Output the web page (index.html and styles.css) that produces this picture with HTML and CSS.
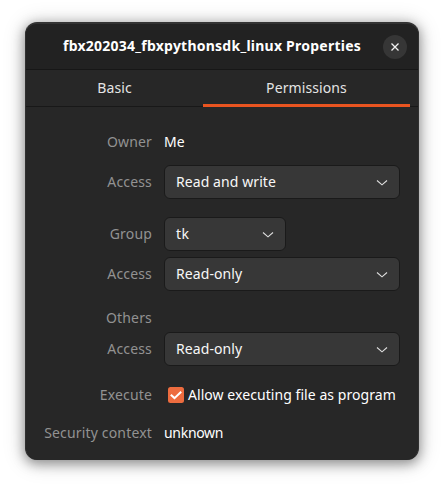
FILE: index.html
```html
<!DOCTYPE html>
<html lang="en">
<head>
<meta charset="utf-8">
<title>Properties</title>
<link rel="stylesheet" href="styles.css">
</head>
<body>
<main class="window">
  <header class="titlebar">
    <h1 class="title"><span>fbx202034_fbxpythonsdk_linux Properties</span></h1>
    <button class="close" aria-label="Close"><svg width="8" height="8" viewBox="0 0 8 8"><path d="M.5.5l7 7M7.5.5l-7 7"/></svg></button>
  </header>
  <nav class="tabs">
    <a class="tab tab-basic"><span>Basic</span></a>
    <a class="tab active"><span>Permissions</span></a>
  </nav>
  <section class="form">
    <div class="row"><span class="label">Owner</span><span class="value">Me</span></div>
    <div class="row field access-owner"><span class="label">Access</span><button class="select"><span>Read and write</span><svg width="12" height="7" viewBox="0 0 12 7"><path d="M1 1.5l5 4.3 5-4.3"/></svg></button></div>
    <div class="row field group"><span class="label">Group</span><button class="select small"><span class="tk">tk</span><svg width="12" height="7" viewBox="0 0 12 7"><path d="M1 1.5l5 4.3 5-4.3"/></svg></button></div>
    <div class="row field access-group"><span class="label">Access</span><button class="select"><span>Read-only</span><svg width="12" height="7" viewBox="0 0 12 7"><path d="M1 1.5l5 4.3 5-4.3"/></svg></button></div>
    <div class="row others"><span class="label">Others</span></div>
    <div class="row field access-others"><span class="label">Access</span><button class="select"><span>Read-only</span><svg width="12" height="7" viewBox="0 0 12 7"><path d="M1 1.5l5 4.3 5-4.3"/></svg></button></div>
    <div class="row execute"><span class="label">Execute</span><span class="check"><svg width="16" height="16" viewBox="0 0 16 16"><rect width="16" height="16" rx="2.5"/><path d="M2.8 7.7l3.7 3.4L13.2 4.7"/></svg><span class="value">Allow executing file as program</span></span></div>
    <div class="row security"><span class="label">Security context</span><span class="value context">unknown</span></div>
  </section>
</main>
</body>
</html>
```
FILE: styles.css
```css
* { box-sizing: border-box; }
body {
  margin: 0;
  height: 488px;
  padding: 22px 25px;
  overflow: hidden;
  background: #fff;
  color: #f7f7f7;
  font: 14px/22px "Noto Sans", "Open Sans", sans-serif;
}
.window {
  width: 394px;
  height: 438px;
  border: 1px solid #303030;
  border-top: 2px solid #333;
  border-bottom-color: #272727;
  border-radius: 12px;
  background: #272727;
  box-shadow: 0 3px 12px 1px rgba(0, 0, 0, .38), 0 2px 22px 2px rgba(0, 0, 0, .14);
  overflow: hidden;
}
.titlebar {
  display: flex;
  align-items: center;
  justify-content: flex-end;
  height: 46px;
  padding: 0 11px 0 37px;
  background: #222;
  border-bottom: 1px solid #171717;
}
.title {
  flex: 1;
  margin: -2px 0 0;
  font-size: 14px;
  font-weight: 700;
  line-height: 22px;
  letter-spacing: .24px;
  white-space: nowrap;
  color: #fff;
}
button { font: inherit; color: inherit; letter-spacing: .08px; }
.close {
  display: flex;
  align-items: center;
  justify-content: center;
  width: 24px;
  height: 24px;
  padding: 0;
  border: 0;
  border-radius: 50%;
  background: #363636;
}
svg { display: block; flex: none; }
svg path { fill: none; stroke: #f2f2f2; stroke-width: 1.3; }
.tabs {
  display: flex;
  height: 37px;
  padding: 0 8px 0 0;
  border-bottom: 1px solid #181818;
}
.tab {
  width: 177px;
  height: 37px;
  text-align: center;
  line-height: 36px;
  letter-spacing: .1px;
  color: #e4e4e4;
}
.tab.active { width: 207px; border-bottom: 3px solid #e95420; }
.form { padding: 24px 18px 0 0; }
.row {
  display: grid;
  grid-template-columns: 126px 236px;
  column-gap: 12px;
  align-items: center;
  height: 22px;
}
.field { height: 34px; }
.label { text-align: right; color: #929292; white-space: nowrap; letter-spacing: .17px; }
.value { white-space: nowrap; color: #fff; letter-spacing: .06px; }
.context { letter-spacing: -.3px; }
.select {
  display: flex;
  align-items: center;
  justify-content: space-between;
  width: 236px;
  height: 34px;
  padding: 0 11px;
  border: 1px solid #1a1a1a;
  border-radius: 6px;
  background: #373737;
}
.select path { stroke: #dedede; stroke-width: 1.1; }
.small { width: 122px; }
.tk { letter-spacing: .5px; }
.access-owner { margin-top: 12px; }
.group { margin-top: 18px; }
.access-group { margin-top: 6px; }
.others { margin-top: 16px; }
.access-others { margin-top: 3px; }
.execute { margin-top: 18px; }
.security { margin-top: 16px; }
.check { display: flex; align-items: center; gap: 4px; padding-left: 4px; }
.check rect { fill: #ed6c3f; }
.check path { stroke: #fff; stroke-width: 2; }
```
